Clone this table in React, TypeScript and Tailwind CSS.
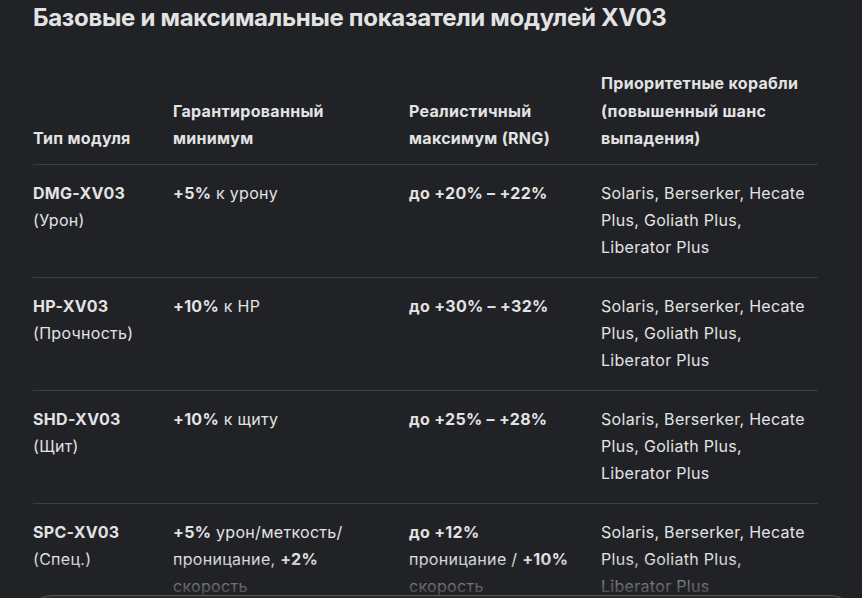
import React from 'react';

type Row = {
  name: string;
  sub: string;
  min: React.ReactNode;
  max: React.ReactNode;
  ships: string;
};

const ships = 'Solaris, Berserker, Hecate Plus, Goliath Plus, Liberator Plus';

const rows: Row[] = [
  {
    name: 'DMG-XV03',
    sub: '(Урон)',
    min: <><b>+5%</b> к урону</>,
    max: <b>до +20% – +22%</b>,
    ships,
  },
  {
    name: 'HP-XV03',
    sub: '(Прочность)',
    min: <><b>+10%</b> к HP</>,
    max: <b>до +30% – +32%</b>,
    ships,
  },
  {
    name: 'SHD-XV03',
    sub: '(Щит)',
    min: <><b>+10%</b> к щиту</>,
    max: <b>до +25% – +28%</b>,
    ships,
  },
  {
    name: 'SPC-XV03',
    sub: '(Спец.)',
    min: <><b>+5%</b> урон/меткость/ проницание, <b>+2%</b> скорость</>,
    max: <><b>до +12%</b> проницание / <b>+10%</b> скорость</>,
    ships,
  },
];

export default function App() {
  return (
    <div
      className="relative w-[862px] h-[598px] overflow-hidden bg-[#212226] text-[#e3e3e3]"
      style={{ fontFamily: 'Inter, "Noto Sans", sans-serif' }}
    >
      <div className="pl-[33px] pr-[44px] pt-[2px]">
        <h2 className="text-[24px] leading-[32px] font-bold tracking-[-0.3px] text-[#e3e3e3]">
          Базовые и максимальные показатели модулей XV03
        </h2>

        <table className="mt-[36px] w-[785px] table-fixed border-collapse text-[16px] tracking-[0.3px]">
          <colgroup>
            <col className="w-[140px]" />
            <col className="w-[236px]" />
            <col className="w-[192px]" />
            <col className="w-[217px]" />
          </colgroup>
          <thead className="leading-[27.5px]">
            <tr className="border-b border-[#3d3e42]">
              <th className="text-left align-bottom font-bold pr-4 pb-[11px]">Тип модуля</th>
              <th className="text-left align-bottom font-bold pr-8 pb-[11px]">Гарантированный минимум</th>
              <th className="text-left align-bottom font-bold pr-8 pb-[11px]">Реалистичный максимум (RNG)</th>
              <th className="text-left align-bottom font-bold pr-2 pb-[11px]">Приоритетные корабли (повышенный шанс выпадения)</th>
            </tr>
          </thead>
          <tbody className="leading-[27px]">
            {rows.map((r) => (
              <tr key={r.name} className="border-b border-[#3d3e42]">
                <td className="align-top pr-4 pt-[15px] pb-[16px]">
                  <b>{r.name}</b>
                  <br />
                  {r.sub}
                </td>
                <td className="align-top pr-8 pt-[15px] pb-[16px]">{r.min}</td>
                <td className="align-top pr-8 pt-[15px] pb-[16px]">{r.max}</td>
                <td className="align-top pr-2 pt-[15px] pb-[16px]">{r.ships}</td>
              </tr>
            ))}
          </tbody>
        </table>
      </div>

      {/* fade at the bottom edge */}
      <div className="absolute left-0 right-0 bottom-0 h-[40px] bg-gradient-to-b from-[#212226]/0 to-[#212226]/90" />
      {/* input box peeking in */}
      <div className="absolute left-[28px] right-[8px] top-[595px] h-[40px] rounded-t-[24px] border-t border-[#55565b] bg-[#2a2b2f]" />
    </div>
  );
}
